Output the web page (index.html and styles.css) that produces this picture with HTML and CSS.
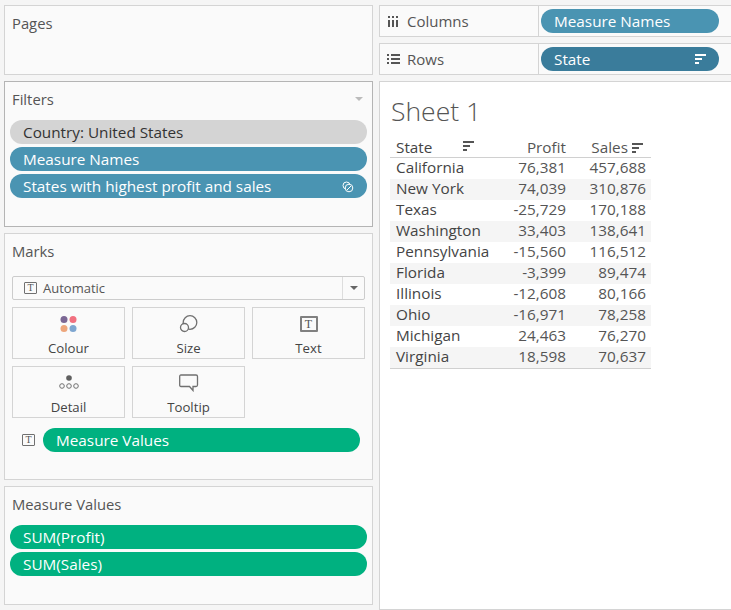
FILE: index.html
```html
<!DOCTYPE html>
<html lang="en">
  <head>
    <meta charset="UTF-8" />
    <title>Sheet 1</title>
    <link rel="stylesheet" href="styles.css">
  </head>
  <body>
    <div class="sidebar">
      <section class="card pages-card">
        <h3>Pages</h3>
      </section>

      <section class="card filters-card">
        <h3>Filters</h3>
        <span class="card-arrow"></span>
        <div class="pill-list">
          <div class="pill grey">Country: United States</div>
          <div class="pill blue">Measure Names</div>
          <div class="pill blue">
            States with highest profit and sales
            <svg class="pill-icon" width="12" height="12" viewBox="0 0 12 12" fill="none" stroke="#fff" stroke-width="1">
              <circle cx="4.5" cy="4.5" r="3.5" />
              <circle cx="7" cy="7" r="3.8" fill="#4a94b2" />
              <path d="M5 9 L9 5" />
            </svg>
          </div>
        </div>
      </section>

      <section class="card marks-card">
        <h3>Marks</h3>
        <div class="mark-select">
          <span class="t-icon">T</span>
          <span class="mark-select-label">Automatic</span>
          <span class="mark-select-btn"><span class="select-arrow"></span></span>
        </div>
        <div class="mark-grid">
          <div class="mark-btn">
            <svg width="20" height="18" viewBox="0 0 20 18">
              <circle cx="5" cy="4.5" r="3.5" fill="#7b6794" />
              <circle cx="14" cy="4.5" r="3.5" fill="#f1707f" />
              <circle cx="5" cy="13.5" r="3.5" fill="#eda67c" />
              <circle cx="14" cy="13.5" r="3.5" fill="#7ea6d0" />
            </svg>
            <span>Colour</span>
          </div>
          <div class="mark-btn">
            <svg width="20" height="18" viewBox="0 0 20 18" fill="none" stroke="#707070" stroke-width="1.3">
              <circle cx="11" cy="7.5" r="6.8" />
              <circle cx="5.5" cy="12.5" r="4" fill="#fafafa" />
            </svg>
            <span>Size</span>
          </div>
          <div class="mark-btn">
            <span class="t-icon big">T</span>
            <span>Text</span>
          </div>
          <div class="mark-btn">
            <svg width="20" height="18" viewBox="0 0 20 18" fill="none" stroke="#707070" stroke-width="1">
              <circle cx="10" cy="4" r="2.8" fill="#5f5f5f" stroke="none" />
              <circle cx="3" cy="12" r="2.3" />
              <circle cx="10" cy="12" r="2.3" />
              <circle cx="17" cy="12" r="2.3" />
            </svg>
            <span>Detail</span>
          </div>
          <div class="mark-btn">
            <svg width="20" height="18" viewBox="0 0 20 18" fill="none" stroke="#707070" stroke-width="1.3">
              <path d="M2 1 H17 Q18.5 1 18.5 2.5 V11 Q18.5 12.5 17 12.5 H14 V16.5 L10.5 12.5 H2 Q.7 12.5 .7 11 V2.5 Q.7 1 2 1 Z" />
            </svg>
            <span>Tooltip</span>
          </div>
        </div>
        <div class="mark-field">
          <span class="t-icon">T</span>
          <div class="pill green">Measure Values</div>
        </div>
      </section>

      <section class="card values-card">
        <h3>Measure Values</h3>
        <div class="pill-list">
          <div class="pill green">SUM(Profit)</div>
          <div class="pill green">SUM(Sales)</div>
        </div>
      </section>
    </div>

    <div class="main">
      <div class="shelf">
        <div class="shelf-label">
          <svg width="13" height="11" viewBox="0 0 13 11" fill="#555">
            <path d="M1 0h2v2H1zM1 4h2v7H1zM5 0h2v2H5zM5 4h2v7H5zM9 0h2v2H9zM9 4h2v7H9z" />
          </svg>
          Columns
        </div>
        <div class="shelf-body">
          <div class="pill blue">Measure Names</div>
        </div>
      </div>
      <div class="shelf">
        <div class="shelf-label">
          <svg width="13" height="10" viewBox="0 0 13 10" fill="#555">
            <path d="M0 0h2v2H0zM4 0h9v2H4zM0 4h2v2H0zM4 4h9v2H4zM0 8h2v2H0zM4 8h9v2H4z" />
          </svg>
          Rows
        </div>
        <div class="shelf-body">
          <div class="pill dark">
            State
            <svg class="pill-icon" width="11" height="10" viewBox="0 0 11 10" fill="#fff">
              <path d="M0 0h11v2H0zM0 4h7v2H0zM0 8h4v2H0z" />
            </svg>
          </div>
        </div>
      </div>

      <div class="sheet">
        <h1>Sheet 1</h1>
        <table id="stateTable">
          <thead>
            <tr>
              <th class="state-col">
                State
                <svg class="sort-icon first" width="11" height="10" viewBox="0 0 11 10" fill="#555">
                  <path d="M0 0h11v2H0zM0 4h7v2H0zM0 8h4v2H0z" />
                </svg>
              </th>
              <th class="num profit-col">Profit</th>
              <th class="num sales-col">
                Sales<svg class="sort-icon" width="11" height="10" viewBox="0 0 11 10" fill="#555">
                  <path d="M0 0h11v2H0zM0 4h7v2H0zM0 8h4v2H0z" />
                </svg>
              </th>
            </tr>
          </thead>
          <tbody>
            <tr><td>California</td><td class="num">76,381</td><td class="num">457,688</td></tr>
            <tr><td>New York</td><td class="num">74,039</td><td class="num">310,876</td></tr>
            <tr><td>Texas</td><td class="num">-25,729</td><td class="num">170,188</td></tr>
            <tr><td>Washington</td><td class="num">33,403</td><td class="num">138,641</td></tr>
            <tr><td>Pennsylvania</td><td class="num">-15,560</td><td class="num">116,512</td></tr>
            <tr><td>Florida</td><td class="num">-3,399</td><td class="num">89,474</td></tr>
            <tr><td>Illinois</td><td class="num">-12,608</td><td class="num">80,166</td></tr>
            <tr><td>Ohio</td><td class="num">-16,971</td><td class="num">78,258</td></tr>
            <tr><td>Michigan</td><td class="num">24,463</td><td class="num">76,270</td></tr>
            <tr><td>Virginia</td><td class="num">18,598</td><td class="num">70,637</td></tr>
          </tbody>
        </table>
      </div>
    </div>
  </body>
</html>
```

FILE: styles.css
```css
html,
body {
  height: 100%;
}

body {
  font-family: "Open Sans", sans-serif;
  font-size: 15.3px;
  color: #555;
  background-color: #f5f5f5;
  margin: 0;
  height: 610px;
  overflow: hidden;
  display: flex;
  gap: 6px;
  padding: 5px 0 0 4px;
  box-sizing: border-box;
}

h3 {
  font-size: 14.8px;
  font-weight: 400;
  color: #555;
  margin: 0;
  line-height: 20px;
}

.sidebar {
  width: 369px;
  flex-shrink: 0;
  display: flex;
  flex-direction: column;
  gap: 6px;
}

.card {
  position: relative;
  box-sizing: border-box;
  background-color: #fafafa;
  border: 1px solid #d4d4d4;
  padding: 7px 5px 0 5px;
}

.card h3 {
  padding-left: 2px;
}

.pages-card {
  height: 70px;
}

.filters-card {
  height: 146px;
  border-color: #b4b4b4;
}

.marks-card {
  height: 247px;
}

.values-card {
  height: 119px;
}

.card-arrow {
  position: absolute;
  top: 15px;
  right: 9px;
  border-left: 4px solid transparent;
  border-right: 4px solid transparent;
  border-top: 4px solid #bbb;
}

.pill-list {
  display: flex;
  flex-direction: column;
  gap: 3px;
  margin-top: 11px;
}

.pill {
  height: 24px;
  line-height: 24px;
  border-radius: 12px;
  padding-left: 13px;
  color: white;
  position: relative;
  white-space: nowrap;
}

.pill-icon {
  position: absolute;
  right: 13px;
  top: 7px;
}

.grey {
  background-color: #d4d4d4;
  color: #333;
}

.blue {
  background-color: #4a94b2;
}

.dark {
  background-color: #3a7c9b;
}

.green {
  background-color: #00b180;
}

.t-icon {
  display: inline-block;
  box-sizing: border-box;
  width: 13px;
  height: 12px;
  border: 1px solid #707070;
  border-radius: 1px;
  font-family: "Liberation Serif", serif;
  font-size: 10px;
  line-height: 10px;
  text-align: center;
  color: #555;
  flex-shrink: 0;
}

.t-icon.big {
  width: 18px;
  height: 16px;
  border-width: 2px;
  border-color: #808080;
  font-size: 12px;
  line-height: 12px;
  margin-top: 1px;
  margin-bottom: 1px;
}

.mark-select {
  display: flex;
  align-items: center;
  height: 24px;
  box-sizing: border-box;
  margin: 15px 2px 7px 2px;
  background-color: #fafafa;
  border: 1px solid #ccc;
  border-radius: 2px;
  padding-left: 11px;
  font-size: 13px;
}

.mark-select-label {
  flex: 1;
  margin-left: 6px;
}

.mark-select-btn {
  width: 21px;
  height: 22px;
  border-left: 1px solid #ddd;
  display: flex;
  align-items: center;
  justify-content: center;
}

.select-arrow {
  border-left: 4px solid transparent;
  border-right: 4px solid transparent;
  border-top: 4px solid #666;
}

.mark-grid {
  display: grid;
  grid-template-columns: repeat(3, 113px);
  column-gap: 7px;
  row-gap: 7px;
  margin-left: 2px;
}

.mark-btn {
  box-sizing: border-box;
  height: 52px;
  border: 1px solid #d4d4d4;
  display: flex;
  flex-direction: column;
  align-items: center;
  padding-top: 7px;
  font-size: 13.2px;
  color: #444;
}

.mark-btn span:last-child {
  margin-top: 6px;
  line-height: 18px;
}

.mark-field {
  display: flex;
  align-items: center;
  gap: 8px;
  margin: 10px 7px 0 12px;
}

.mark-field .pill {
  flex: 1;
}

.main {
  flex: 1;
  display: flex;
  flex-direction: column;
  gap: 6px;
  min-width: 0;
}

.shelf {
  display: flex;
  height: 32px;
  box-sizing: border-box;
  background-color: #fafafa;
  border: 1px solid #d4d4d4;
  border-right: none;
}

.shelf-label {
  width: 159px;
  box-sizing: border-box;
  border-right: 1px solid #d4d4d4;
  display: flex;
  align-items: center;
  gap: 7px;
  padding-left: 7px;
  font-size: 15px;
}

.shelf-body {
  flex: 1;
  padding: 3px 12px 0 2px;
}

.sheet {
  flex: 1;
  background-color: white;
  border: 1px solid #d4d4d4;
  border-right: none;
  padding: 14px 0 0 10px;
}

h1 {
  font-weight: 300;
  font-size: 26.5px;
  line-height: 30px;
  color: #555;
  margin: 0 0 11px 1px;
}

table {
  width: 261px;
  table-layout: fixed;
  border-collapse: collapse;
  font-size: 15.3px;
  border-bottom: 1px solid #d0d0d0;
}

th {
  box-sizing: border-box;
  font-weight: 400;
  text-align: left;
  height: 19px;
  padding: 0 5px 0 6px;
  border-bottom: 1px solid #d0d0d0;
  color: #444;
  position: relative;
  white-space: nowrap;
}

td {
  box-sizing: border-box;
  height: 21px;
  line-height: 19px;
  padding: 0 5px 2px 6px;
  color: #444;
  white-space: nowrap;
}

.state-col {
  width: 100px;
}

.profit-col {
  width: 81px;
}

.sales-col {
  padding-right: 8px;
}

.num {
  text-align: right;
  color: #555;
}

tbody tr:nth-child(even) {
  background-color: #f5f5f5;
}

.sort-icon {
  margin-left: 4px;
}

.sort-icon.first {
  position: absolute;
  left: 73px;
  top: 4px;
  margin-left: 0;
}
```
